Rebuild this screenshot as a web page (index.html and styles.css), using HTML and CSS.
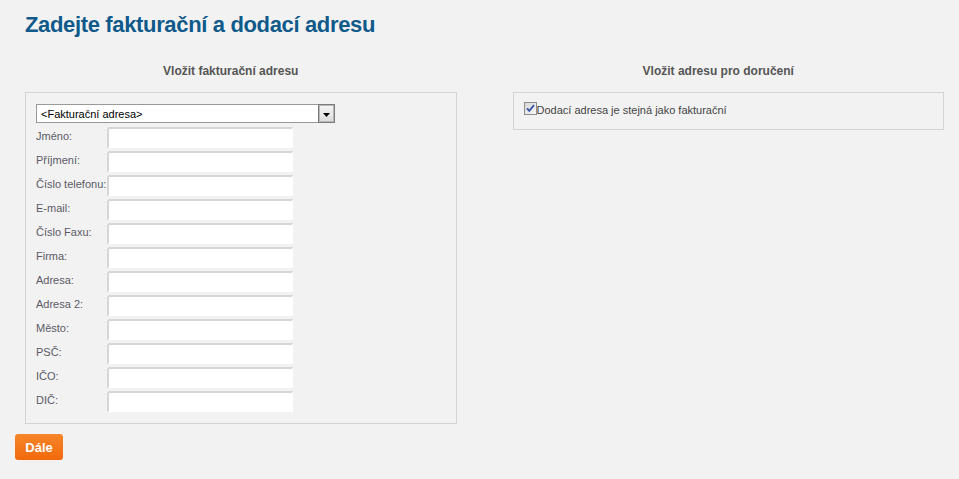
FILE: index.html
```html
<!DOCTYPE html>
<html lang="cs">
<head>
  <meta charset="UTF-8">
  <title>Zadejte fakturační a dodací adresu</title>
  <link rel="stylesheet" href="styles.css">
</head>
<body>
  <div class="page">
    <h1 class="title">Zadejte fakturační a dodací adresu</h1>

    <div class="columns">
      <div class="col">
        <h2 class="col-title">Vložit fakturační adresu</h2>
        <div class="box billing">
          <div class="select">
            <span class="select-text">&lt;Fakturační adresa&gt;</span>
            <span class="select-btn">
              <svg width="7" height="4" viewBox="0 0 7 4"><path d="M0 0h7L3.5 4z" fill="#000"/></svg>
            </span>
          </div>

          <div class="row"><label for="jmeno">Jméno:</label><input type="text" id="jmeno"></div>
          <div class="row"><label for="prijmeni">Příjmení:</label><input type="text" id="prijmeni"></div>
          <div class="row"><label for="telefon">Číslo telefonu:</label><input type="text" id="telefon"></div>
          <div class="row"><label for="email">E-mail:</label><input type="text" id="email"></div>
          <div class="row"><label for="fax">Číslo Faxu:</label><input type="text" id="fax"></div>
          <div class="row"><label for="firma">Firma:</label><input type="text" id="firma"></div>
          <div class="row"><label for="adresa">Adresa:</label><input type="text" id="adresa"></div>
          <div class="row"><label for="adresa2">Adresa 2:</label><input type="text" id="adresa2"></div>
          <div class="row"><label for="mesto">Město:</label><input type="text" id="mesto"></div>
          <div class="row"><label for="psc">PSČ:</label><input type="text" id="psc"></div>
          <div class="row"><label for="ico">IČO:</label><input type="text" id="ico"></div>
          <div class="row"><label for="dic">DIČ:</label><input type="text" id="dic"></div>
        </div>
      </div>

      <div class="col">
        <h2 class="col-title">Vložit adresu pro doručení</h2>
        <div class="box shipping">
          <label class="same">
            <svg class="check" width="13" height="13" viewBox="0 0 13 13">
              <defs>
                <linearGradient id="cb" x1="0" y1="0" x2="1" y2="1">
                  <stop offset="0" stop-color="#d6d6d6"/>
                  <stop offset="1" stop-color="#f8f8f8"/>
                </linearGradient>
              </defs>
              <rect x="0.5" y="0.5" width="12" height="12" fill="url(#cb)" stroke="#8e8e8e"/>
              <path d="M3 6.3l2.3 2.6L10 3.2" fill="none" stroke="#3b58a8" stroke-width="1.9"/>
            </svg>
            <span class="same-text">Dodací adresa je stejná jako fakturační</span>
          </label>
        </div>
      </div>
    </div>

    <button class="next" type="button">Dále</button>
  </div>
</body>
</html>
```

FILE: styles.css
```css
body {
  margin: 0;
  background: #f2f2f2;
  font-family: "Liberation Sans", Arial, sans-serif;
  color: #555;
}

.page {
  padding: 0 15px;
}

.title {
  margin: 12px 0 0 10px;
  font-size: 22px;
  line-height: 26px;
  letter-spacing: -0.35px;
  color: #0f5a8a;
}

.columns {
  display: flex;
  gap: 56px;
  margin-left: 10px;
}

.col {
  width: 432px;
}

.col-title {
  margin: 26px 0 14px;
  padding-right: 20px;
  font-size: 12px;
  line-height: 14px;
  text-align: center;
  color: #555;
}

.box {
  border: 1px solid #d4d4d4;
}

.billing {
  padding: 11px 10px 11px;
}

.select {
  display: flex;
  justify-content: space-between;
  width: 299px;
  height: 19px;
  box-sizing: border-box;
  border: 1px solid #999;
  background: #fff;
  margin-bottom: 4px;
}

.select-text {
  font-size: 11px;
  line-height: 13px;
  padding: 3px 0 0 4px;
  color: #000;
}

.select-btn {
  display: flex;
  align-items: center;
  justify-content: center;
  width: 17px;
  margin: -1px -1px -1px 0;
  border: 1px solid #7c7c7c;
  box-shadow: inset 0 0 0 1px #b8b8b8;
  box-sizing: border-box;
  background: linear-gradient(#f6f6f6, #dadada);
}

.select-btn svg {
  margin-top: 2px;
}

.row {
  display: flex;
  align-items: flex-start;
  height: 21px;
  margin-bottom: 3px;
}

.row:last-child {
  margin-bottom: 0;
}

.row label {
  width: 71px;
  font-size: 11px;
  line-height: 19px;
  color: #5a5a66;
  white-space: nowrap;
}

.row input {
  width: 186px;
  height: 21px;
  box-sizing: border-box;
  margin: 0;
  padding: 0 3px;
  border: 1px solid #fff;
  border-top: 2px solid #d6d6d6;
  border-left: 2px solid #d6d6d6;
  border-radius: 3px 0 0 0;
  background: #fff;
  font-family: inherit;
  font-size: 11px;
}

.shipping {
  padding: 9px 10px 12px;
}

.same {
  display: flex;
  align-items: flex-start;
}

.check {
  display: block;
  flex-shrink: 0;
}

.same-text {
  font-size: 11px;
  line-height: 13px;
  margin-top: 2px;
  color: #444;
}

.next {
  display: block;
  margin-top: 10px;
  width: 48px;
  height: 26px;
  padding: 0;
  border: none;
  border-radius: 3px;
  background: linear-gradient(#f6862a, #f2690c);
  color: #fff;
  font-family: inherit;
  font-size: 13px;
  font-weight: bold;
  cursor: pointer;
}
```
